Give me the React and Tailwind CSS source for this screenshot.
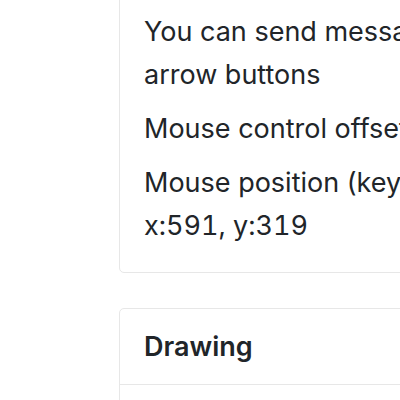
import React from 'react';

const Card = ({ children, className = '' }) => (
  <div className={`rounded-[5px] border border-[#e7e7e7] bg-white ${className}`}>{children}</div>
);

export default function App() {
  return (
    <div className="h-[400px] w-[400px] overflow-hidden bg-white font-['Inter',sans-serif] text-[27px] leading-[43px] text-[#212529]">
      <div className="-mt-[15px] ml-[119px] w-[600px]">
        <Card>
          <div className="px-6 pt-6 pb-[25px]">
            <p className="mb-[11px]">
              You can send messages with the
              <br />
              arrow buttons
            </p>
            <p className="mb-[11px]">Mouse control offset: none</p>
            <p>
              Mouse position (keyboard):
              <br />
              <span className="tabular-nums">x:591, y:319</span>
            </p>
          </div>
        </Card>

        <Card className="mt-[35px]">
          <div className="border-b border-[#e7e7e7] px-6 py-[16px]">
            <h5 className="font-semibold">Drawing</h5>
          </div>
          <div className="h-[200px]"></div>
        </Card>
      </div>
    </div>
  );
}
